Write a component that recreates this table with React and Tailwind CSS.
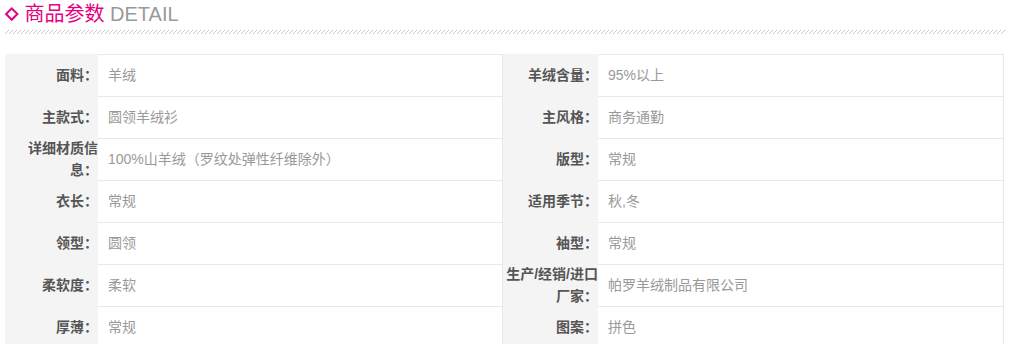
import React from "react";

const rows = [
    ["面料：", "羊绒", "羊绒含量：", "95%以上"],
    ["主款式：", "圆领羊绒衫", "主风格：", "商务通勤"],
    ["详细材质信息：", "100%山羊绒（罗纹处弹性纤维除外）", "版型：", "常规"],
    ["衣长：", "常规", "适用季节：", "秋,冬"],
    ["领型：", "圆领", "袖型：", "常规"],
    ["柔软度：", "柔软", "生产/经销/进口厂家：", "帕罗羊绒制品有限公司"],
    ["厚薄：", "常规", "图案：", "拼色"],
];

const Label = ({ children }) => (
    <div className="flex items-center justify-end bg-[#f4f4f4] text-right text-[14px] font-bold leading-[22px] text-[#555]">
        <div>{children}</div>
    </div>
);

const Value = ({ children }) => (
    <div className="flex items-center border-t border-r border-[#e8e8e8] pl-[10px] text-[14px] text-[#999]">
        {children}
    </div>
);

const App = () => {
    return (
        <div
            className="w-[1010px] h-[344px] overflow-hidden bg-white"
            style={{ fontFamily: '"Liberation Sans", "Noto Sans CJK SC", sans-serif' }}
        >
            {/* title */}
            <div className="flex items-center pt-1 h-6">
                <div className="ml-[7px] w-[9.5px] h-[9.5px] border-[2.5px] border-[#e4007f] rotate-45" />
                <div className="ml-[8px] text-[20px] leading-5">
                    <span className="text-[#e4007f]">商品参数</span>
                    <span className="text-[#999]"> DETAIL</span>
                </div>
            </div>
            <svg className="block ml-[5px] mt-[5px]" width="1000" height="5">
                <defs>
                    <pattern id="hatch" width="4" height="5" patternUnits="userSpaceOnUse">
                        <path d="M0 5 L4 1" stroke="#c8c8c8" strokeWidth="1" />
                    </pattern>
                </defs>
                <rect width="1000" height="5" fill="url(#hatch)" />
            </svg>

            {/* params table */}
            <div className="ml-[5px] mt-5 grid grid-cols-[93px_405px_95px_406px] auto-rows-[42px]">
                {rows.map((r, i) => (
                    <React.Fragment key={i}>
                        <Label>{r[0]}</Label>
                        <Value>{r[1]}</Value>
                        <Label>{r[2]}</Label>
                        <Value>{r[3]}</Value>
                    </React.Fragment>
                ))}
            </div>
        </div>
    );
};

export default App;
